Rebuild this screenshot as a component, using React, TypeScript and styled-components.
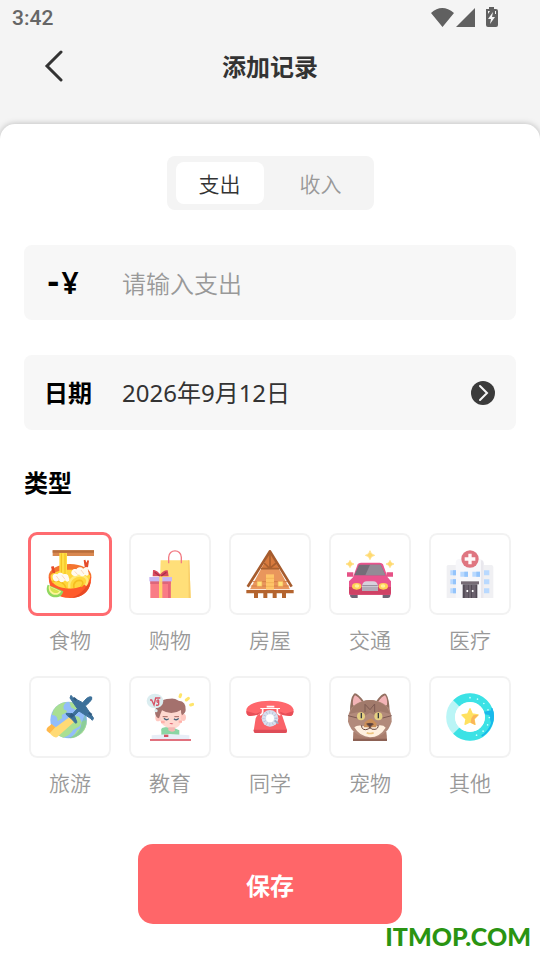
import React, { useState } from "react";
import styled, { createGlobalStyle } from "styled-components";

const GlobalStyle = createGlobalStyle`
  * { box-sizing: border-box; }
  body {
    margin: 0;
    background: #f4f4f4;
    color: #333;
    font-family: "Noto Sans", "Noto Sans CJK SC", sans-serif;
  }
  button, input { font: inherit; color: inherit; }
`;

const Screen = styled.main`
  display: flex;
  flex-direction: column;
  min-height: 100vh;
`;

const StatusBar = styled.div`
  display: flex;
  align-items: center;
  justify-content: space-between;
  height: 36px;
  padding: 0 42px 0 12px;
  color: #666;
  font: 500 21px/36px Roboto, sans-serif;
`;

const StatusIcons = styled.div`
  display: flex;
  align-items: center;
  svg { display: block; }
`;

const Header = styled.header`
  display: grid;
  grid-template-columns: 60px 1fr 60px;
  align-items: center;
  height: 88px;
  padding: 0 24px 28px;
`;

const BackButton = styled.button`
  display: flex;
  justify-content: center;
  padding: 0;
  border: 0;
  background: none;
`;

const Title = styled.h1`
  margin: 0;
  text-align: center;
  font-size: 24px;
  line-height: 36px;
  font-weight: 700;
  font-family: "Noto Sans CJK SC", sans-serif;
`;

const Sheet = styled.form`
  display: flex;
  flex-direction: column;
  flex: 1;
  padding: 32px 24px 0;
  border-radius: 15px 15px 0 0;
  background: #fff;
  box-shadow: 0 0 6px rgba(0, 0, 0, 0.25);
`;

const Segmented = styled.div`
  display: flex;
  align-self: center;
  gap: 13px;
  padding: 6px 9px;
  border-radius: 8px;
  background: #f4f4f4;
`;

const Segment = styled.button<{ $active: boolean }>`
  width: 88px;
  height: 42px;
  padding: 0;
  border: 0;
  border-radius: 8px;
  background: ${(p) => (p.$active ? "#fff" : "transparent")};
  color: ${(p) => (p.$active ? "#333" : "#999")};
  font-family: "Noto Sans CJK SC", sans-serif;
  font-size: 21px;
  font-weight: 350;
  line-height: 42px;
`;

const Field = styled.div`
  display: flex;
  align-items: center;
  height: 75px;
  margin-top: 35px;
  padding: 0 20px;
  border-radius: 8px;
  background: #f7f7f7;
  font-size: 24px;
`;

const FieldLabel = styled.label`
  flex: none;
  width: 78px;
  color: #000;
  font-weight: 700;
  line-height: 36px;
`;

const AmountLabel = styled(FieldLabel)`
  display: flex;
  gap: 2px;
  padding-left: 3px;
  font-size: 30px;
  font-weight: 600;
`;

const Sign = styled.span`
  font-family: "DejaVu Sans", sans-serif;
  font-weight: 700;
`;

const AmountInput = styled.input`
  flex: 1;
  min-width: 0;
  height: 48px;
  padding: 0;
  border: 0;
  outline: 0;
  background: none;
  font-family: "Noto Sans CJK SC", sans-serif;
  font-weight: 350;
  &::placeholder { color: #999; opacity: 1; }
`;

const DateButton = styled.button`
  display: flex;
  flex: 1;
  align-items: center;
  justify-content: space-between;
  padding: 0;
  border: 0;
  background: none;
  line-height: 36px;
`;

const SectionTitle = styled.h2`
  margin: 34px 0 0;
  color: #000;
  font-size: 24px;
  line-height: 36px;
  font-family: "Noto Sans CJK SC", sans-serif;
  font-weight: 700;
`;

const Categories = styled.div`
  display: grid;
  grid-template-columns: repeat(5, 1fr);
  row-gap: 21px;
  margin: 32px -4px 0;
`;

const Category = styled.label`
  display: flex;
  flex-direction: column;
  align-items: center;
  color: #999;
  font-family: "Noto Sans CJK SC", sans-serif;
  font-size: 21px;
  font-weight: 350;
  line-height: 30px;
`;

const HiddenRadio = styled.input`
  position: absolute;
  opacity: 0;
  pointer-events: none;
`;

const Tile = styled.span<{ $selected: boolean }>`
  display: grid;
  place-items: center;
  width: 84px;
  height: 84px;
  margin-bottom: 8px;
  border: ${(p) => (p.$selected ? "3px solid #ff6b70" : "1px solid #fff")};
  border-radius: 9px;
  box-shadow: ${(p) => (p.$selected ? "none" : "inset 0 0 0 2px #f2f2f2")};
  svg { display: block; }
`;

const SaveButton = styled.button`
  align-self: center;
  width: 264px;
  height: 80px;
  margin-top: 47px;
  border: 0;
  border-radius: 15px;
  background: #ff6669;
  color: #fff;
  font-family: "Noto Sans", "Noto Sans CJK SC", sans-serif;
  font-size: 24px;
  font-weight: 700;
`;

const Watermark = styled.div`
  margin-right: -15px;
  text-align: right;
  color: #2a9412;
  font: 900 25px/24px Lato, sans-serif;
`;

const Art = ({ children }: { children: React.ReactNode }) => (
  <svg width="48" height="48" viewBox="0 0 144 144" aria-hidden="true">{children}</svg>
);

const FoodIcon = () => (
  <Art>
    <ellipse cx="72" cy="78" rx="64" ry="36" fill="#f4742f" />
    <path d="M8 80C8 122 34 144 72 144S136 122 136 80Z" fill="#ff5b2b" />
    <path d="M134 96C130 128 104 144 72 144C96 138 116 122 126 98Z" fill="#e84a25" />
    <path d="M14 76C28 56 112 52 132 76C136 98 104 116 72 116S10 102 14 76Z" fill="#ffd63d" />
    <path d="M70 114C66 86 90 72 112 78C126 84 128 96 118 106" fill="none" stroke="#ffe978" strokeWidth="7" />
    <path d="M84 114C80 98 92 88 106 92C112 96 112 102 106 110M18 96C36 88 54 96 60 114" fill="none" stroke="#f5bd20" strokeWidth="5" />
    <path d="M20 1H144V18H20Z" fill="#d98850" /><path d="M20 1H144V8H20Z" fill="#b86e3b" />
    <path d="M40 9H63V76H40Z" fill="#ffdf45" /><path d="M46 10V74M57 10V74" stroke="#f3bd20" strokeWidth="3" />
    <path d="M15 50L23 48L28 70L20 68ZM113 31L118 29L121 38L125 30L129 32L126 52L116 51Z" fill="#e54b2a" />
    <path d="M20 83C18 74 26 68 34 73C40 66 49 68 52 73C61 69 69 75 68 82C75 94 63 99 57 91C51 99 42 98 39 91C30 98 22 93 20 83ZM76 71C75 61 84 54 91 58C96 50 108 51 111 56C119 50 128 54 126 64C132 74 124 82 117 74C112 81 102 79 99 73C92 81 80 80 76 71Z" fill="#fffaf0" />
    <path d="M31 78L40 90M48 76L57 88M86 64L95 74M105 60L114 72" stroke="#f9c6a0" strokeWidth="2" />
    <path d="M5 104C-5 126 12 147 37 141C45 139 50 133 52 124Z" fill="#91d860" />
    <path d="M9 107C5 124 17 137 34 134C40 132 44 128 45 124Z" fill="#fff49a" />
    <path d="M12 110C12 122 20 130 34 129L40 124Z" fill="#d5e44f" />
  </Art>
);

const ShoppingIcon = () => (
  <Art>
    <path d="M44 31H130L134 144H40Z" fill="#ffdf79" /><path d="M127 31H130L134 144H128Z" fill="#f8cd68" />
    <path d="M68 40V22C68-4 106-4 106 22V40" fill="none" stroke="#f27a83" strokeWidth="4" />
    <path d="M13 89H74V144H13Z" fill="#f97c86" /><path d="M13 92H74V102H13Z" fill="#dd667a" />
    <path d="M66 92H74V144H66Z" fill="#e76579" />
    <path d="M39 79H49V144H39Z" fill="#ffd36b" /><path d="M10 81H78V94H10Z" fill="#c8b7f3" /><path d="M40 81H49V94H40Z" fill="#ffdc77" />
    <path d="M40 79L20 79L21 60C32 60 38 68 43 73C48 66 56 60 65 61L68 79Z" fill="#d94b5e" />
    <path d="M26 67L41 78M61 67L46 78" stroke="#a92f4b" strokeWidth="4" />
  </Art>
);

const HouseIcon = () => (
  <Art>
    <path d="M72 7L132 118H12Z" fill="#e9965c" />
    <path d="M72 7L99 56H46Z" fill="#d87a3d" />
    <path d="M45 56H99M72 9V55M54 39L71 55L91 39" fill="none" stroke="#a9602f" strokeWidth="5" />
    <path d="M20 95H124M14 108H130" stroke="#d67e45" strokeWidth="3" />
    <path d="M60 73H84V119H60Z" fill="#ffc568" /><path d="M60 85H84M60 98H84M60 109H84" stroke="#efa94f" strokeWidth="2" />
    <path d="M33 94H48V109H33ZM96 94H111V109H96Z" fill="#ffe279" stroke="#efa356" strokeWidth="2" />
    <path d="M5 110L72 4L137 110" fill="none" stroke="#a65c2e" strokeWidth="8" strokeLinejoin="round" />
    <path d="M1 120H143V130H1ZM24 130H36V144H24ZM52 130H64V144H52ZM80 130H92V144H80ZM108 130H120V144H108Z" fill="#b4642f" />
  </Art>
);

const CarIcon = () => (
  <Art>
    <path d="M12 126H35V144H18Q12 143 12 136ZM110 126H133V138Q132 144 126 144H110Z" fill="#6f6475" />
    <path d="M21 82L35 43Q38 38 45 38H101Q108 38 111 43L125 82L135 94V134H9V94Z" fill="#e9548e" />
    <path d="M39 44H104L118 76H25Z" fill="#756d78" /><path d="M72 44H104L118 76H58Z" fill="#938b96" />
    <path d="M3 67H22V80H3ZM122 67H141V80H122Z" fill="#e65286" />
    <path d="M9 111H135V128Q134 134 127 134H17Q10 134 9 127Z" fill="#cf4265" />
    <path d="M48 123V108Q50 94 62 94H82Q94 94 96 108V123Z" fill="#d7d2dc" /><path d="M49 107H95M48 114H96M48 120H96" stroke="#8e8794" strokeWidth="3" />
    <ellipse cx="32" cy="109" rx="14" ry="10" fill="#ffd255" /><ellipse cx="112" cy="109" rx="14" ry="10" fill="#ffd255" />
    <ellipse cx="33" cy="108" rx="7" ry="5" fill="#fff09b" /><ellipse cx="111" cy="108" rx="7" ry="5" fill="#fff09b" />
    <path d="M72 2Q74 13 86 16Q74 18 72 29Q70 18 58 16Q70 13 72 2ZM12 31Q14 40 24 42Q14 44 12 53Q10 44 0 42Q10 40 12 31ZM132 31Q134 40 144 42Q134 44 132 53Q130 44 120 42Q130 40 132 31Z" fill="#ffda70" stroke="#ffda70" strokeWidth="2" />
  </Art>
);

const HospitalIcon = () => (
  <Art>
    <path d="M2 49Q3 45 8 45H38V144H2ZM104 45H137Q142 46 142 51V144H104Z" fill="#f0f0f3" />
    <path d="M29 144V39Q29 27 41 27H101Q113 28 113 40V144Z" fill="#f7f7fa" />
    <path d="M105 31H108Q113 34 113 40V144H105Z" fill="#e8e7ed" />
    <circle cx="72" cy="27" r="26" fill="#df7580" /><path d="M67 11H77V22H88V32H77V43H67V32H56V22H67Z" fill="#fff8f8" />
    <path d="M13 61H30V76H13ZM13 88H30V103H13ZM13 115H30V130H13ZM43 65H66V80H43ZM79 65H102V80H79ZM114 61H130V76H114ZM114 88H130V103H114ZM114 115H130V130H114Z" fill="#b9d9ff" />
    <path d="M21 61H30V76H21ZM21 88H30V103H21ZM21 115H30V130H21ZM55 65H66V80H55ZM91 65H102V80H91Z" fill="#94c4fb" />
    <path d="M45 94H99V103H45Z" fill="#756b75" /><path d="M50 103H94V144H50Z" fill="#514a55" />
    <path d="M56 105H67V144H56ZM78 105H89V144H78Z" fill="#6b626e" /><path d="M72 104V144" stroke="#aaa1aa" strokeWidth="2" /><path d="M64 120V126M80 120V126" stroke="#fff" strokeWidth="5" />
  </Art>
);

const TravelIcon = () => (
  <Art>
    <circle cx="68" cy="81" r="55" fill="#93bdfa" />
    <path d="M22 52Q35 29 62 27Q48 38 54 50Q62 49 63 57L52 64Q44 65 49 75L35 85Q35 65 18 66ZM70 27Q94 28 104 42L91 52L75 43ZM75 66L99 71Q112 90 98 101L81 111Q73 127 52 134Q39 131 29 121L43 113L60 106L59 84ZM122 81Q123 105 109 119Q90 136 72 136Q88 125 93 112L104 106L106 86Z" fill="#a9df93" />
    <path d="M118 60Q129 100 99 125Q82 137 58 135Q101 130 107 89Z" fill="#73bda1" opacity=".55" />
    <path d="M72 71L84 87L33 133Q24 135 17 127L3 112L18 97L29 103Z" fill="#ffda75" />
    <path d="M17 93L28 103L11 121L2 113Q0 105 10 99Z" fill="#ffb84b" />
    <path d="M137 12Q141 18 129 29L118 39L143 76L139 82L133 76L99 54L85 68L93 88L89 91L76 77L62 66L60 61L80 62L94 47L72 15L75 7L81 14L110 29L122 16Q131 9 137 12Z" fill="#3d719a" stroke="#3d719a" strokeWidth="3" strokeLinejoin="round" />
    <path d="M85 12L93 19L88 24L81 17ZM131 57L139 63L134 69L126 61ZM76 60L86 67L77 75L69 70Z" fill="#315c82" />
  </Art>
);

const EducationIcon = () => (
  <Art>
    <path d="M48 105Q72 96 100 112V128H46V116Q44 109 48 105Z" fill="#8bd5a4" />
    <path d="M38 50L106 46L109 76Q106 103 78 109Q43 101 39 73Z" fill="#ffd9d0" />
    <ellipse cx="36" cy="74" rx="8" ry="11" fill="#ffc9c2" /><ellipse cx="112" cy="73" rx="8" ry="11" fill="#ffc9c2" />
    <path d="M67 103H86L87 113Q77 120 67 112Z" fill="#f4b7b3" />
    <path d="M27 59Q30 18 72 17Q84 14 98 23Q121 25 119 51Q119 60 108 67Q104 60 105 51Q77 69 48 52Q43 63 39 76Q29 73 27 59Z" fill="#a4716d" />
    <ellipse cx="27" cy="24" rx="25" ry="22" fill="#dbedf0" /><circle cx="30" cy="53" r="5" fill="#dbedf0" />
    <path d="M12 21L17 21L24 36L29 15H43M38 29V23Q37 18 33 23Q32 28 38 28V34Q36 38 30 36" fill="none" stroke="#d75467" strokeWidth="4" />
    <path d="M54 76Q62 84 68 77M84 77Q91 84 98 76" fill="none" stroke="#48667c" strokeWidth="4" /><path d="M50 71H65M85 71H99" stroke="#a56760" strokeWidth="3" />
    <path d="M70 91Q76 88 82 92Q76 96 70 91Z" fill="#e06473" /><path d="M45 87H56M98 86H108" stroke="#ffb1aa" strokeWidth="7" />
    <path d="M17 127L72 123L130 127V139H17Z" fill="#e8eef7" /><path d="M12 138H135V144H12Z" fill="#e1717e" />
    <path d="M54 125H67V132H54Z" fill="#d65363" />
    <path d="M104 5L102 11M127 16L121 21M140 34L134 36" stroke="#ffe56b" strokeWidth="9" strokeLinecap="round" />
  </Art>
);

const PhoneIcon = () => (
  <Art>
    <path d="M42 48H102L123 111V117Q122 120 117 120H28Q23 119 23 113L29 76Q32 65 41 62Z" fill="#fa6268" />
    <path d="M23 110H122V116Q121 120 116 120H28Q23 119 23 113Z" fill="#de4d58" />
    <path d="M1 50C8 14 136 14 143 50L141 63Q139 69 131 69L110 66Q103 64 102 56V45H43V57Q42 64 34 66L11 69Q3 68 1 61Z" fill="#ff676c" />
    <path d="M1 54L3 64Q5 69 12 69L35 65Q42 63 43 57L30 62ZM143 54L141 63Q138 70 131 69L110 66Q102 62 102 56L118 62Z" fill="#e74f58" />
    <path d="M62 41H85M50 45V57Q49 65 42 66M94 45V57Q95 65 103 66" fill="none" stroke="#fff5f6" strokeWidth="5" />
    <circle cx="72" cy="76" r="25" fill="#d7dfef" /><circle cx="72" cy="76" r="18" fill="none" stroke="#b5c0d2" strokeWidth="9" strokeDasharray="2 7" /><circle cx="72" cy="76" r="12" fill="#fff" />
    <path d="M86 82L97 92" stroke="#9aabc2" strokeWidth="5" />
  </Art>
);

const CatIcon = () => (
  <Art>
    <path d="M22 116H121Q123 130 123 144H21Q21 130 22 116Z" fill="#a97d6d" /><path d="M21 137H123V144H21Z" fill="#8c6154" />
    <path d="M12 56Q12 15 24 2Q31-4 53 24Q72 18 91 24Q112-4 120 3Q130 16 131 56Z" fill="#937061" />
    <path d="M21 36Q19 16 27 7Q37 11 48 27L32 44ZM123 36Q125 16 117 7Q107 11 96 27L110 43Z" fill="#f3b4b7" />
    <path d="M18 43Q38 22 72 22T126 43Q138 61 137 86Q123 133 72 134Q20 132 6 86Q5 60 18 43Z" fill="#b28a7b" />
    <path d="M21 42Q44 22 72 22T122 42L133 63L103 55L88 68L72 59L57 68L40 56L10 63Z" fill="#a17a6b" />
    <path d="M57 57V34L72 50L86 33V57M6 68L34 75M110 75L137 68" fill="none" stroke="#7d5a52" strokeWidth="3" />
    <path d="M25 103Q34 94 52 99L72 104L92 98Q112 94 119 104Q102 132 72 133Q41 131 25 103Z" fill="#fff0df" />
    <path d="M57 88Q67 77 78 77L91 91V103H53Z" fill="#cb8f58" />
    <ellipse cx="45" cy="70" rx="12" ry="12" fill="#e5d083" /><ellipse cx="97" cy="70" rx="12" ry="12" fill="#e5d083" />
    <path d="M46 60V76M97 60V76" stroke="#353b42" strokeWidth="4" />
    <path d="M62 93Q72 89 82 93L72 103ZM72 101V108M47 97Q46 110 59 110Q70 109 72 103Q75 111 87 109Q98 107 96 96" fill="none" stroke="#65433e" strokeWidth="3" />
    <path d="M63 92H81L72 101Z" fill="#57413f" /><path d="M62 119Q72 124 83 119" fill="none" stroke="#edc47f" strokeWidth="5" />
  </Art>
);

const OtherIcon = () => (
  <Art>
    <circle cx="72" cy="72" r="58" fill="none" stroke="#baf5f6" strokeWidth="27" />
    <path d="M31 31A58 58 0 1 1 31 113" fill="none" stroke="#3ce2e5" strokeWidth="27" />
    <path d="M137 46A70 70 0 0 1 107 129" fill="none" stroke="#16b7ed" strokeWidth="5" />
    <path d="M114 56L141 51Q147 72 140 93Q133 92 130 66L115 64Z" fill="#19b9eb" />
    <path d="M72 14A58 58 0 0 1 72 130" fill="none" stroke="#c9ffff" strokeWidth="5" strokeLinecap="round" strokeDasharray="0 23" />
    <circle cx="72" cy="72" r="45" fill="#fff" />
    <path d="M72 47L79 63L96 66L84 78L87 94L72 87L57 94L60 78L48 66L65 63Z" fill="#ffe160" stroke="#ffe160" strokeLinejoin="round" strokeWidth="4" />
    <path d="M98 65L85 78L88 96L74 89L76 76L82 67Z" fill="#fbb65a" />
  </Art>
);

const categories = [
  { name: "食物", Icon: FoodIcon },
  { name: "购物", Icon: ShoppingIcon },
  { name: "房屋", Icon: HouseIcon },
  { name: "交通", Icon: CarIcon },
  { name: "医疗", Icon: HospitalIcon },
  { name: "旅游", Icon: TravelIcon },
  { name: "教育", Icon: EducationIcon },
  { name: "同学", Icon: PhoneIcon },
  { name: "宠物", Icon: CatIcon },
  { name: "其他", Icon: OtherIcon },
];

export default function App() {
  const [mode, setMode] = useState("支出");
  const [category, setCategory] = useState("食物");

  return (
    <>
      <GlobalStyle />
      <Screen>
        <StatusBar>
          <span>3:42</span>
          <StatusIcons>
            <svg width="67" height="24" viewBox="0 0 67 24" fill="#606060" aria-hidden="true">
              <path d="M0 7Q11-3 23 7L11.500 21ZM25 21L44 2V21Z" />
              <path fillRule="evenodd" d="M55 3H58V1H63V3H65Q67 3 67 5V19Q67 21 65 21H57Q55 21 55 19V5ZM62 6L57 13H60L59 18L64 11H61ZM57 5V8L59 5ZM64 5V8H65V5Z" />
            </svg>
          </StatusIcons>
        </StatusBar>
        <Header>
          <BackButton type="button" aria-label="返回">
            <svg width="20" height="32" viewBox="0 0 20 32" fill="none" stroke="#333" strokeWidth="3" strokeLinecap="round" aria-hidden="true">
              <path d="M17 2L3 16L17 30" />
            </svg>
          </BackButton>
          <Title>添加记录</Title>
        </Header>
        <Sheet onSubmit={(e) => e.preventDefault()}>
          <Segmented>
            {["支出", "收入"].map((name) => (
              <Segment key={name} type="button" $active={mode === name} aria-pressed={mode === name} onClick={() => setMode(name)}>
                {name}
              </Segment>
            ))}
          </Segmented>
          <Field>
            <AmountLabel htmlFor="amount"><Sign>{mode === "支出" ? "-" : "+"}</Sign><span>¥</span></AmountLabel>
            <AmountInput id="amount" inputMode="decimal" placeholder={`请输入${mode}`} />
          </Field>
          <Field>
            <FieldLabel htmlFor="date">日期</FieldLabel>
            <DateButton id="date" type="button">
              <span>2026年9月12日</span>
              <svg width="26" height="26" viewBox="0 0 26 26" fill="none" aria-hidden="true">
                <circle cx="13" cy="13" r="12" fill="#3b3b3b" />
                <path d="M10 6L17 13L10 20" stroke="#f7f7f7" strokeWidth="2" strokeLinecap="round" />
              </svg>
            </DateButton>
          </Field>
          <SectionTitle>类型</SectionTitle>
          <Categories role="radiogroup" aria-label="类型">
            {categories.map(({ name, Icon }) => (
              <Category key={name}>
                <HiddenRadio type="radio" name="category" checked={category === name} onChange={() => setCategory(name)} />
                <Tile $selected={category === name}><Icon /></Tile>
                {name}
              </Category>
            ))}
          </Categories>
          <SaveButton type="submit">保存</SaveButton>
          <Watermark>ITMOP.COM</Watermark>
        </Sheet>
      </Screen>
    </>
  );
}
